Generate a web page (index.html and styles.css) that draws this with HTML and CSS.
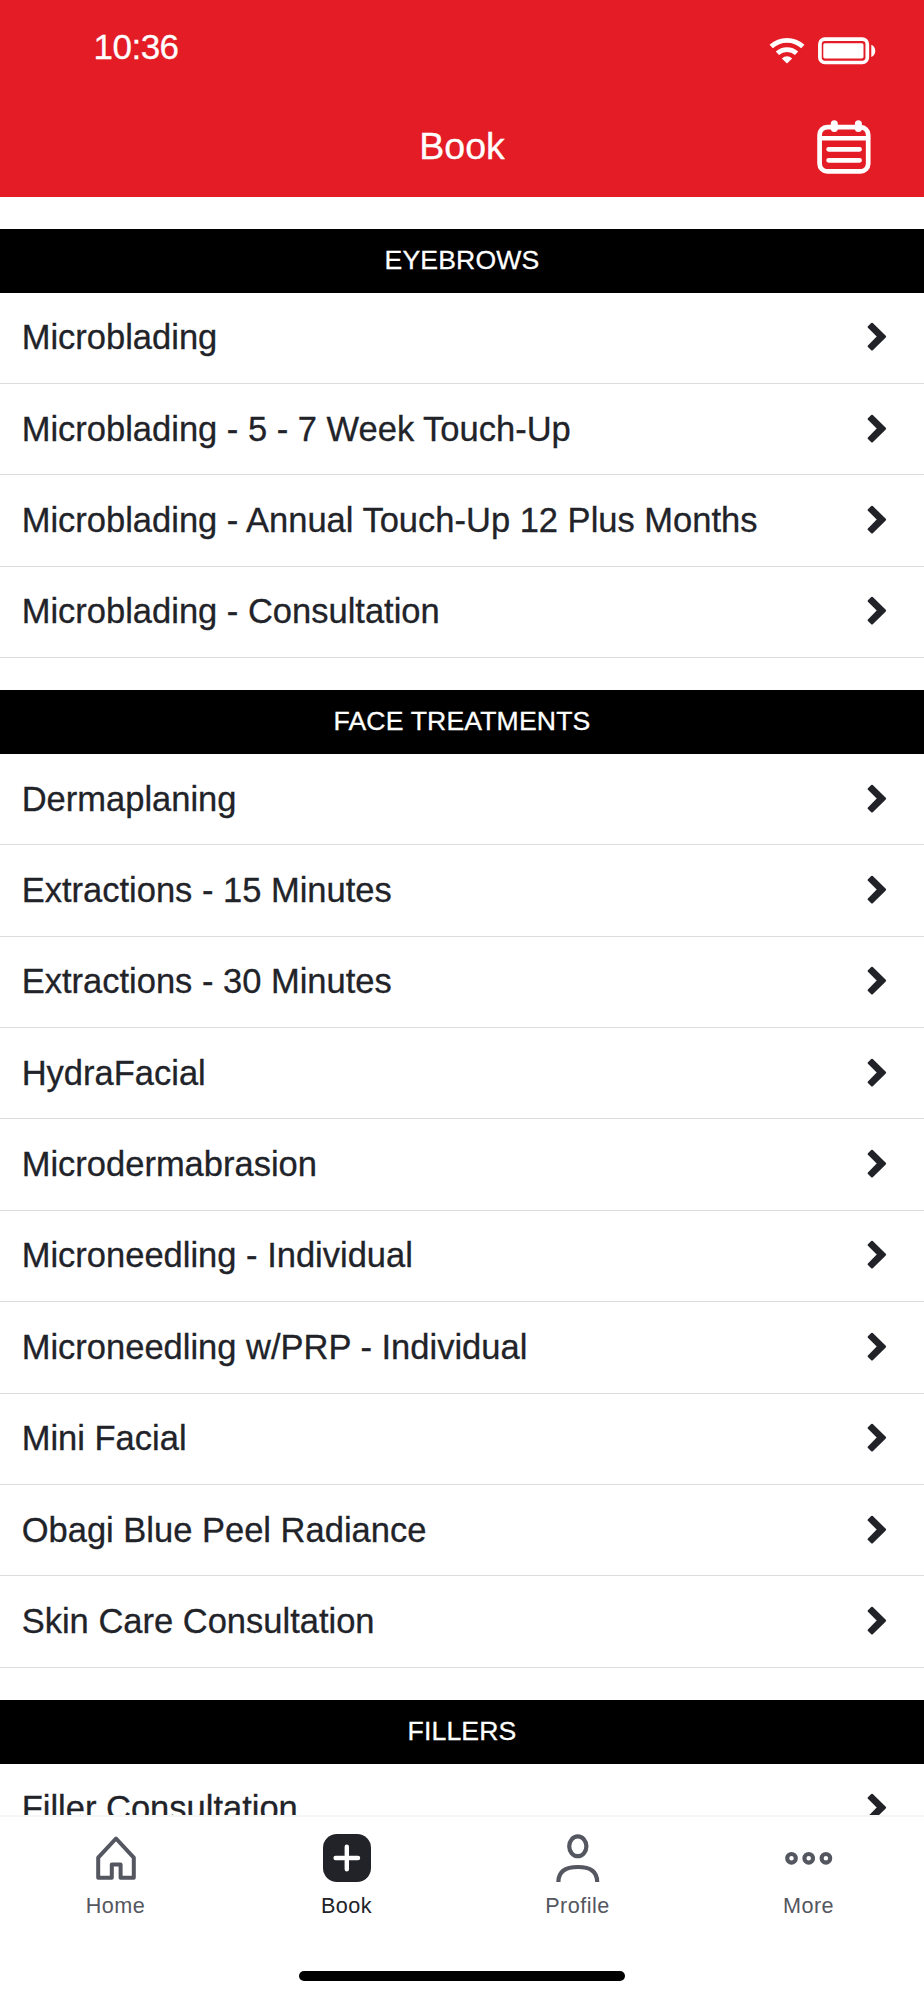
FILE: index.html
```html
<!DOCTYPE html>
<html lang="en">
<head>
<meta charset="utf-8">
<title>Book</title>
<link rel="stylesheet" href="styles.css">
</head>
<body>
<svg class="defs" aria-hidden="true">
  <symbol id="chevron" viewBox="0 0 20 30"><path d="M5 1.8 18 14.6 5 27.4 1.7 24.2 11.2 14.6 1.7 5z" fill="currentColor" stroke="currentColor" stroke-width="2.2" stroke-linejoin="round"/></symbol>
</svg>
<div class="app">
  <header class="top">
    <div class="status">
      <span class="time">10:36</span>
      <div class="indicators">
        <svg class="wifi" viewBox="0 0 36 27" width="36" height="27">
          <path d="M2.2 9.6a23 23 0 0 1 31.6 0M8.4 16.2a14.4 14.4 0 0 1 19.2 0" fill="none" stroke="#fff" stroke-width="4.8"/>
          <path d="M12.8 21.4q5.2-4.2 10.4 0L18 26.6z" fill="#fff"/>
        </svg>
        <svg class="battery" viewBox="0 0 58 28" width="58" height="28">
          <rect x="1.9" y="2.1" width="47.4" height="23.4" rx="5" fill="none" stroke="#fff" stroke-width="3.7"/>
          <rect x="5.3" y="6.2" width="40.2" height="15.2" rx="1.6" fill="#fff"/>
          <path d="M53.3 7.8c5.3 2.4 5.3 10 0 12.2z" fill="#fff"/>
        </svg>
      </div>
    </div>
    <div class="titlebar">
      <h1 class="title">Book</h1>
      <svg class="calendar" viewBox="0 0 54 56" width="54" height="56">
        <g fill="none" stroke="#fff" stroke-width="4.7" stroke-linecap="round">
          <rect x="2.6" y="7.2" width="48.6" height="44.2" rx="7.6"/>
          <path d="M3 18.2h48" stroke-width="4.4"/>
          <path d="M11.6 29.3h31M11.6 40.3h31"/>
        </g>
        <rect x="13.8" y="0.2" width="7" height="11.8" rx="3.5" fill="#fff"/>
        <rect x="37.9" y="0.2" width="7" height="11.8" rx="3.5" fill="#fff"/>
      </svg>
    </div>
  </header>
  <main class="list">
    <section class="group">
      <h2 class="heading">EYEBROWS</h2>
      <div class="row"><span>Microblading</span><svg class="chev"><use href="#chevron"/></svg></div>
      <div class="row"><span>Microblading - 5 - 7 Week Touch-Up</span><svg class="chev"><use href="#chevron"/></svg></div>
      <div class="row"><span>Microblading - Annual Touch-Up 12 Plus Months</span><svg class="chev"><use href="#chevron"/></svg></div>
      <div class="row"><span>Microblading - Consultation</span><svg class="chev"><use href="#chevron"/></svg></div>
    </section>
    <section class="group">
      <h2 class="heading">FACE TREATMENTS</h2>
      <div class="row"><span>Dermaplaning</span><svg class="chev"><use href="#chevron"/></svg></div>
      <div class="row"><span>Extractions - 15 Minutes</span><svg class="chev"><use href="#chevron"/></svg></div>
      <div class="row"><span>Extractions - 30 Minutes</span><svg class="chev"><use href="#chevron"/></svg></div>
      <div class="row"><span>HydraFacial</span><svg class="chev"><use href="#chevron"/></svg></div>
      <div class="row"><span>Microdermabrasion</span><svg class="chev"><use href="#chevron"/></svg></div>
      <div class="row"><span>Microneedling - Individual</span><svg class="chev"><use href="#chevron"/></svg></div>
      <div class="row"><span>Microneedling w/PRP - Individual</span><svg class="chev"><use href="#chevron"/></svg></div>
      <div class="row"><span>Mini Facial</span><svg class="chev"><use href="#chevron"/></svg></div>
      <div class="row"><span>Obagi Blue Peel Radiance</span><svg class="chev"><use href="#chevron"/></svg></div>
      <div class="row"><span>Skin Care Consultation</span><svg class="chev"><use href="#chevron"/></svg></div>
    </section>
    <section class="group">
      <h2 class="heading">FILLERS</h2>
      <div class="row"><span>Filler Consultation</span><svg class="chev"><use href="#chevron"/></svg></div>
    </section>
  </main>
  <nav class="tabs">
    <div class="tabrow">
      <a class="tab">
        <svg class="icon" viewBox="0 0 48 48"><path d="M24 4.5 41.8 23.6v20.2H28.6V30.4h-8.8v13.4H6.2V23.6z" fill="none" stroke="currentColor" stroke-width="4" stroke-linejoin="round"/></svg>
        <span>Home</span>
      </a>
      <a class="tab active">
        <svg class="icon" viewBox="0 0 48 48"><rect x="0" y="0" width="48" height="48" rx="14" fill="currentColor"/><path d="M23.8 12.8v22.4M12.6 24h22.4" fill="none" stroke="#fff" stroke-width="4.4" stroke-linecap="round"/></svg>
        <span>Book</span>
      </a>
      <a class="tab">
        <svg class="icon" viewBox="0 0 48 48"><g fill="none" stroke="currentColor" stroke-width="4.2"><ellipse cx="23.8" cy="12.3" rx="8.6" ry="9.9"/><path d="M4.4 48C4.4 38 10.6 33 23.8 33S43.2 38 43.2 48"/></g></svg>
        <span>Profile</span>
      </a>
      <a class="tab">
        <svg class="icon" viewBox="0 0 48 48"><g fill="none" stroke="currentColor" stroke-width="4.1"><circle cx="6.5" cy="24.3" r="4.3"/><circle cx="23.7" cy="24.3" r="4.3"/><circle cx="40.9" cy="24.3" r="4.3"/></g></svg>
        <span>More</span>
      </a>
    </div>
    <div class="home-indicator"></div>
  </nav>
</div>
</body>
</html>
```
FILE: styles.css
```css
* { box-sizing: border-box; }
body { margin: 0; background: #fff; color: #212329; font-family: "Liberation Sans", Arial, sans-serif; -webkit-text-stroke: 0.3px currentColor; }
.defs { position: absolute; width: 0; height: 0; }
.app { display: flex; flex-direction: column; width: 924px; height: 2000px; overflow: hidden; }
.top { flex: none; height: 196.6px; background: #e41c25; color: #fff; }
.status { display: flex; justify-content: space-between; height: 96px; padding: 0 48px 0 93.5px; }
.time { font-size: 35px; line-height: 40px; padding-top: 27px; letter-spacing: -0.5px; }
.indicators { display: flex; gap: 13px; padding-top: 37px; }
.indicators svg { display: block; }
.titlebar { display: grid; grid-template-columns: 1fr auto 1fr; height: 100px; padding-right: 53px; padding-left: 53px; }
.title { grid-column: 2; margin: 0; padding-top: 28px; font-size: 37.6px; line-height: 44px; font-weight: 400; }
.calendar { justify-self: end; margin-top: 24px; }
.list { flex: 1; min-height: 0; overflow: hidden; padding-top: 32.3px; }
.group { padding-bottom: 32.1px; }
.heading { margin: 0; height: 63.7px; background: #000; color: #fff; font-size: 26.6px; line-height: 62.6px; font-weight: 400; text-align: center; letter-spacing: 0.15px; }
.row { display: flex; align-items: center; justify-content: space-between; height: 91.4px; padding: 0 37px 1.2px 21.7px; border-bottom: 1px solid #dcdde0; font-size: 34.5px; line-height: 40px; white-space: nowrap; }
.chev { width: 20px; height: 30px; }
.tabs { flex: none; height: 185px; border-top: 2px solid #f6f6f7; background: #fff; }
.tabrow { display: grid; grid-template-columns: repeat(4, 1fr); height: 154px; }
.tab { display: flex; flex-direction: column; align-items: center; padding-top: 16.5px; color: #545660; font-size: 21.6px; line-height: 26px; letter-spacing: 0.5px; -webkit-text-stroke-width: 0; }
.tab.active { color: #212329; }
.icon { width: 48px; height: 48px; margin-bottom: 11.5px; }
.home-indicator { width: 326px; height: 10px; margin: 0 auto; border-radius: 5px; background: #000; }
```
